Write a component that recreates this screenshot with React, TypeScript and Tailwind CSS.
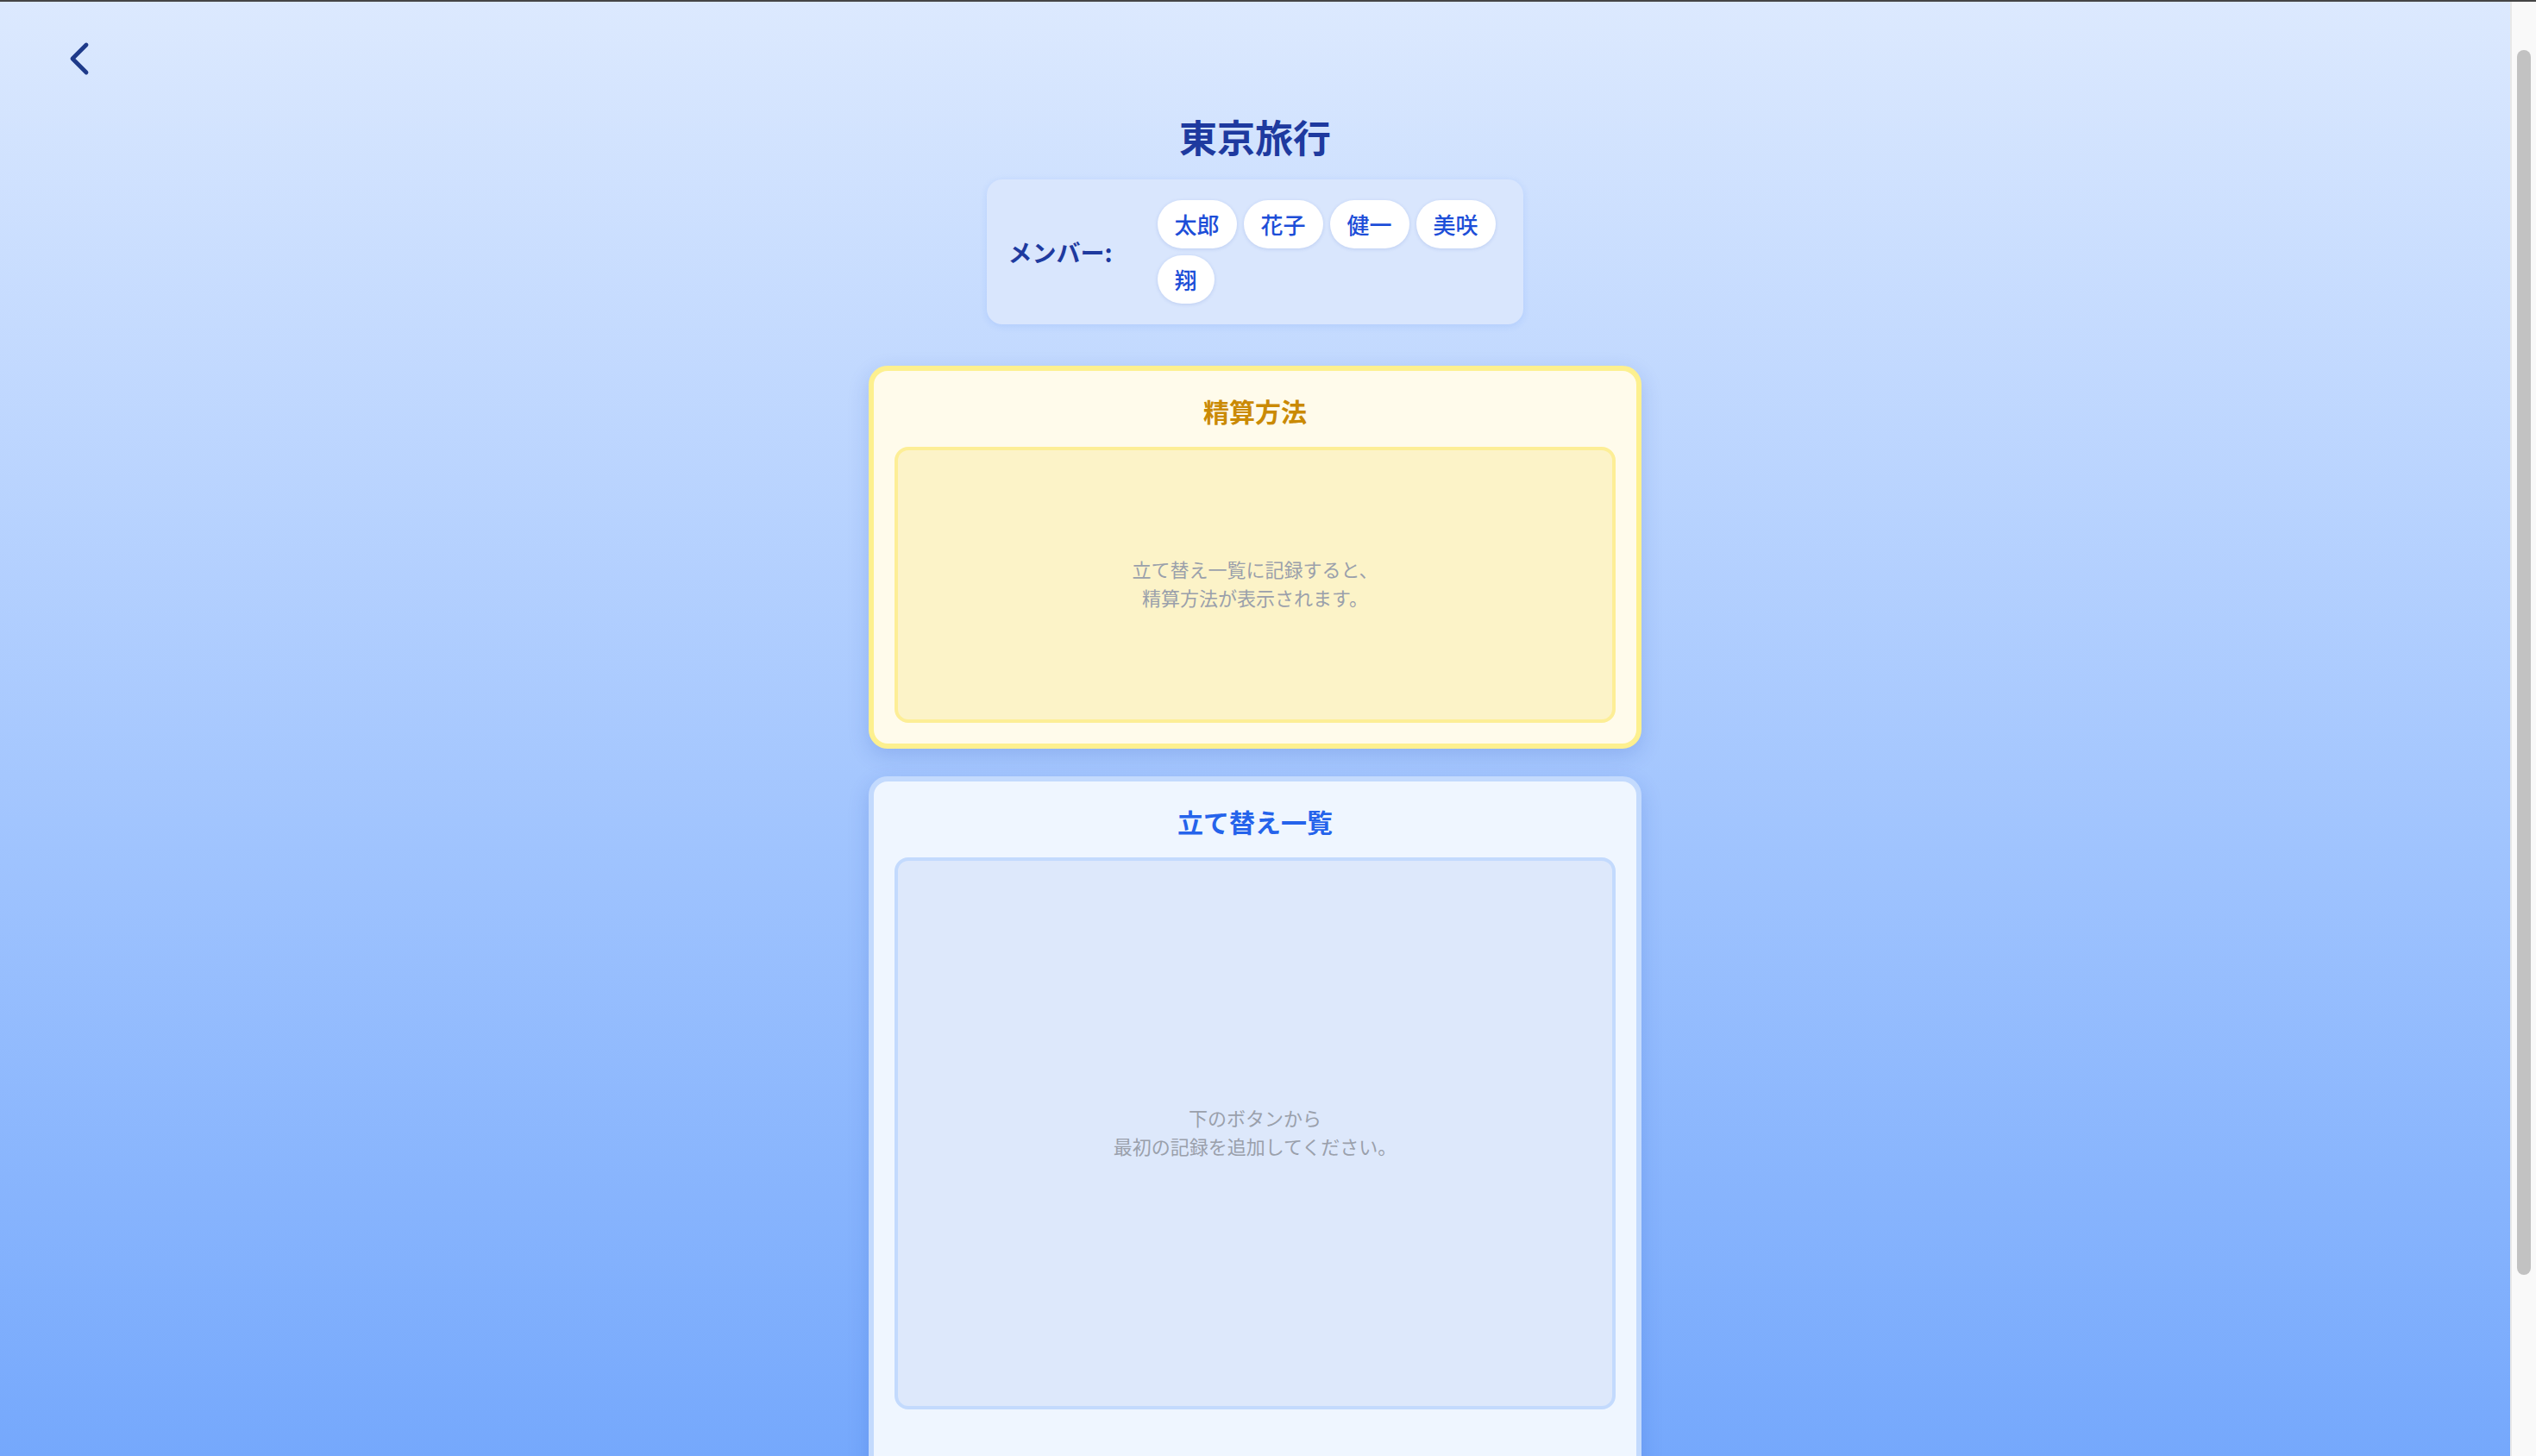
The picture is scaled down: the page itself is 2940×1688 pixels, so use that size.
const members = ["太郎", "花子", "健一", "美咲", "翔"];

const font = { fontFamily: '"Noto Sans CJK JP", "Noto Sans", sans-serif' };

function ChevronLeft() {
  return (
    <svg width="64" height="64" viewBox="0 0 24 24" fill="none" stroke="#1e3a8a" strokeWidth="1.8" strokeLinecap="round" strokeLinejoin="round">
      <path d="m15 18-6-6 6-6" />
    </svg>
  );
}

function MemberCard() {
  return (
    <div className="mt-[22px] flex items-center gap-[52px] rounded-[18px] bg-[#d9e6fd] px-[24px] py-[24px] shadow-[0_2px_8px_rgba(37,99,235,0.12)]">
      <span className="text-[28px] font-bold leading-[40px] text-[#1e3a9f]">メンバー:</span>
      <div className="flex w-[400px] flex-wrap gap-[8px]">
        {members.map((m) => (
          <span
            key={m}
            className="rounded-full bg-white px-[20px] py-[10px] text-[26px] font-medium leading-[36px] text-[#1d4ed8] shadow-[0_1px_4px_rgba(30,64,175,0.15)]"
          >
            {m}
          </span>
        ))}
      </div>
    </div>
  );
}

function Section({
  title,
  lines,
  tone,
}: {
  title: string;
  lines: string[];
  tone: "yellow" | "blue";
}) {
  const yellow = tone === "yellow";
  return (
    <div
      className={
        yellow
          ? "w-[896px] rounded-[22px] border-[6px] border-[#fdf08f] bg-[#fffbeb] p-[24px] shadow-[0_8px_24px_rgba(30,64,175,0.18)]"
          : "mt-[32px] w-[896px] rounded-[22px] border-[6px] border-[#c3dafd] bg-[#eff6ff] px-[24px] pt-[24px] pb-[120px] shadow-[0_8px_24px_rgba(30,64,175,0.18)]"
      }
    >
      <h2
        className={
          yellow
            ? "mb-[20px] text-center text-[30px] font-bold leading-[44px] text-[#ca8a04]"
            : "mb-[20px] text-center text-[30px] font-bold leading-[44px] text-[#2563eb]"
        }
      >
        {title}
      </h2>
      <div
        className={
          yellow
            ? "flex h-[320px] flex-col items-center justify-center rounded-[16px] border-[4px] border-[#fdee96] bg-[#fcf3c8] pb-[4px] text-center text-[22px] leading-[33px] text-[#9aa0ab]"
            : "flex h-[640px] flex-col items-center justify-center rounded-[16px] border-[4px] border-[#c3dafd] bg-[#dde8fb] pb-[4px] text-center text-[22px] leading-[33px] text-[#9aa0ab]"
        }
      >
        {lines.map((l) => (
          <p key={l}>{l}</p>
        ))}
      </div>
    </div>
  );
}

export default function App() {
  return (
    <div className="flex h-[1688px] flex-col overflow-hidden" style={font}>
      <div className="h-[2px] shrink-0 bg-[#454545]" />
      <div className="flex min-h-0 flex-1">
        <main className="flex min-w-0 flex-1 flex-col overflow-hidden bg-gradient-to-b from-[#dce9fe] to-[#75a8fc]">
          <div className="pl-[60px] pt-[34px]">
            <button className="block h-[64px] w-[64px]">
              <ChevronLeft />
            </button>
          </div>
          <div className="flex flex-col items-center">
            <h1 className="mt-[30px] text-[44px] font-bold leading-[56px] text-[#1e3a9f]">東京旅行</h1>
            <MemberCard />
            <div className="mt-[48px] flex flex-col items-center">
              <Section
                tone="yellow"
                title="精算方法"
                lines={["立て替え一覧に記録すると、", "精算方法が表示されます。"]}
              />
              <Section
                tone="blue"
                title="立て替え一覧"
                lines={["下のボタンから", "最初の記録を追加してください。"]}
              />
            </div>
          </div>
        </main>
        <div className="w-[30px] border-l-2 border-[#e8e8e8] bg-[#f9f9f9]">
          <div className="mx-auto mt-[56px] h-[1420px] w-[16px] rounded-full bg-[#c2c2c2]" />
        </div>
      </div>
    </div>
  );
}
